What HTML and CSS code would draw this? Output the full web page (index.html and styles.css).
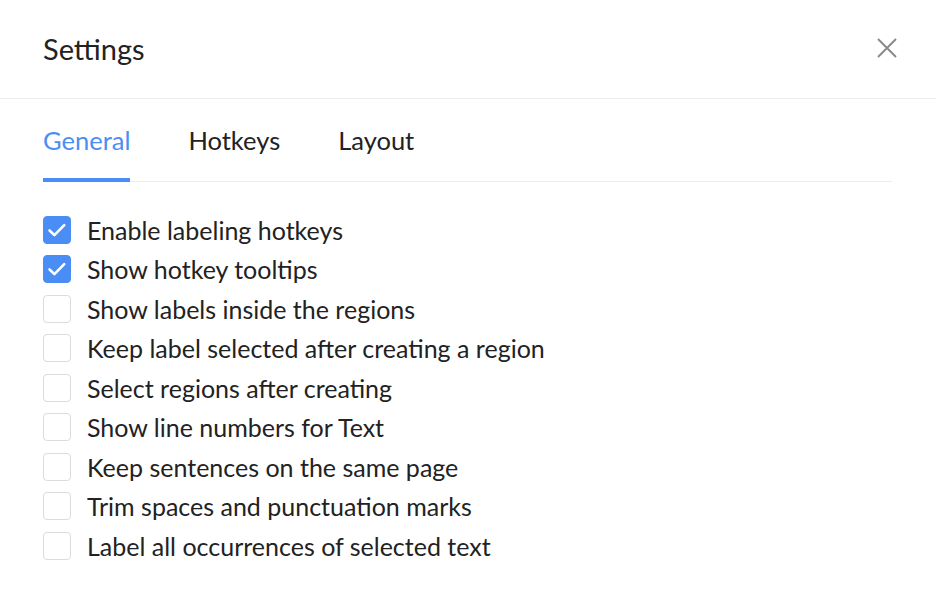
FILE: index.html
```html
<!DOCTYPE html>
<html lang="en">
<head>
<meta charset="utf-8">
<title>Settings</title>
<link rel="stylesheet" href="styles.css">
</head>
<body>
<div class="modal">
  <header class="modal-header">
    <h1 class="modal-title">Settings</h1>
    <button class="close" aria-label="Close">
      <svg width="20" height="20" viewBox="0 0 20 20"><path d="M1 1 L19 19 M19 1 L1 19" stroke="#8a8a8a" stroke-width="2" fill="none"/></svg>
    </button>
  </header>
  <div class="modal-body">
    <nav class="tabs">
      <span class="tab active">General</span>
      <span class="tab">Hotkeys</span>
      <span class="tab">Layout</span>
    </nav>
    <ul class="options">
      <li class="option"><span class="box checked"><svg width="28" height="28" viewBox="0 0 28 28"><path d="M6 14.5 L11.2 19.5 L21.8 8.8" stroke="#fff" stroke-width="2.8" fill="none" stroke-linecap="round" stroke-linejoin="round"/></svg></span>Enable labeling hotkeys</li>
      <li class="option"><span class="box checked"><svg width="28" height="28" viewBox="0 0 28 28"><path d="M6 14.5 L11.2 19.5 L21.8 8.8" stroke="#fff" stroke-width="2.8" fill="none" stroke-linecap="round" stroke-linejoin="round"/></svg></span>Show hotkey tooltips</li>
      <li class="option"><span class="box"></span>Show labels inside the regions</li>
      <li class="option"><span class="box"></span>Keep label selected after creating a region</li>
      <li class="option"><span class="box"></span>Select regions after creating</li>
      <li class="option"><span class="box"></span>Show line numbers for Text</li>
      <li class="option"><span class="box"></span>Keep sentences on the same page</li>
      <li class="option"><span class="box"></span>Trim spaces and punctuation marks</li>
      <li class="option"><span class="box"></span>Label all occurrences of selected text</li>
    </ul>
  </div>
</div>
</body>
</html>
```
FILE: styles.css
```css
* { box-sizing: border-box; }
html, body { margin: 0; padding: 0; background: #fff; }
body {
  font-family: Lato, "Open Sans", sans-serif;
  color: #222;
  width: 936px;
  height: 610px;
  overflow: hidden;
}
.modal { width: 936px; height: 610px; background: #fff; }
.modal-header {
  height: 99px;
  border-bottom: 1px solid #ececec;
  display: flex;
  align-items: center;
  justify-content: space-between;
  padding: 0 38px 0 43px;
}
.modal-title {
  margin: 0;
  font-size: 29px;
  font-weight: 400;
  line-height: 1;
  color: #222;
  padding-bottom: 2px;
}
.close {
  border: 0;
  background: none;
  padding: 0;
  width: 22px;
  height: 22px;
  display: flex;
  align-items: center;
  justify-content: center;
  margin-bottom: 3px;
}
.modal-body { padding: 0 44px 0 43px; }
.tabs {
  display: flex;
  gap: 58px;
  border-bottom: 1px solid #ececec;
  height: 83px;
  align-items: flex-end;
}
.tab {
  font-size: 25.5px;
  line-height: 1;
  padding-bottom: 25px;
  margin-bottom: -1px;
  border-bottom: 4px solid transparent;
  color: #222;
}
.tab.active { color: #4a8ef5; border-bottom-color: #4a8ef5; }
.options {
  list-style: none;
  margin: 0;
  padding: 28px 0 0;
  display: flex;
  flex-direction: column;
}
.option {
  height: 39.5px;
  display: flex;
  align-items: center;
  gap: 16px;
  font-size: 25px;
}
.box {
  width: 28px;
  height: 28px;
  border: 1px solid #dcdcdc;
  border-radius: 4px;
  background: #fff;
  flex: none;
  display: flex;
  align-items: center;
  justify-content: center;
}
.box svg { display: block; }
.box.checked { background: #4a8ef5; border-color: #4a8ef5; }
```
